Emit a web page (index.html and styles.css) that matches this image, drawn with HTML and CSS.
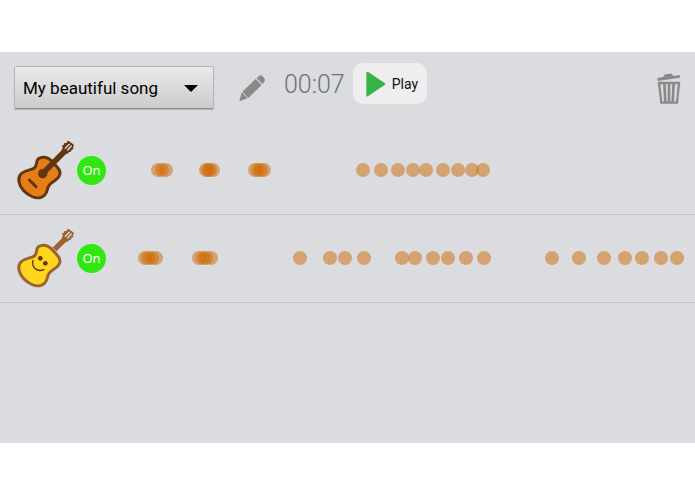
FILE: index.html
```html
<!DOCTYPE html>
<html lang="en">

<head>
    <meta charset="UTF-8">
    <meta name="viewport" content="width=device-width, initial-scale=1.0">
    <title>My beautiful song</title>
    <link rel="stylesheet" href="styles.css">
</head>

<body>
    <main class="app">
        <header class="toolbar">
            <div class="song-select">
                <select id="song" aria-label="Song">
                    <option>My beautiful song</option>
                </select>
            </div>
            <button class="icon-button edit" aria-label="Rename song">
                <svg width="28" height="28" viewBox="0 0 84 84">
                    <path fill="#8a8a8a" d="M4 82 L11 55 L29 73 Z M13 53 L53 15 L71 33 L31 72 Z M56 13 L63 6 Q68 2 73 6 L79 13 Q82 18 79 23 L73 30 Z" />
                </svg>
            </button>
            <time class="timer">00:07</time>
            <button class="play">
                <svg width="22" height="26" viewBox="0 0 66 78">
                    <path fill="#36b34a" stroke="#36b34a" stroke-width="6" stroke-linejoin="round" d="M7 5 L58 39 L7 73 Z" />
                </svg>
                Play
            </button>
            <button class="icon-button trash" aria-label="Delete song">
                <svg width="24" height="32" viewBox="0 0 72 96">
                    <path fill="#8a8a8a" d="M1 15 L18 12 L24 4 L44 2 L49 9 L68 6 L69 14 L2 24 Z" />
                    <path fill="none" stroke="#8a8a8a" stroke-width="7" d="M6 30 H66 L60 89 H13 Z" />
                    <path fill="none" stroke="#8a8a8a" stroke-width="8" d="M22 30 L25 89 M36 30 V89 M50 30 L47 89" />
                </svg>
            </button>
        </header>

        <section class="track">
            <svg class="guitar" width="62" height="64" viewBox="0 0 186 192">
                <path fill="#e67e17" stroke="#653510" stroke-width="9" stroke-linejoin="round" d="M114 67 C104 57 88 54 76 62 C68 70 74 82 64 90 C52 98 34 96 22 110 C13 123 18 143 32 158 C46 172 67 184 84 178 C105 170 100 156 107 144 C114 131 129 129 137 117 C144 106 141 96 133 88 Z" />
                <path fill="none" stroke="#653510" stroke-width="17" d="M90 106 L158 37" />
                <circle cx="89" cy="107" r="14" fill="#653510" />
                <path stroke="#653510" stroke-width="9" stroke-linecap="round" d="M49 126 L69 146" />
                <path fill="#653510" d="M146 38 L149 28 L147 22 L153 20 L154 15 L161 15 L163 9 L169 10 L172 13 L180 18 L183 23 L180 28 L181 33 L175 36 L174 41 L168 42 L164 47 L155 48 Z" />
                <path stroke="#dbdce0" stroke-width="4" stroke-linecap="round" d="M157 31 L169 19 M164 36 L175 24" />
            </svg>
            <button class="toggle" aria-pressed="true">On</button>
            <div class="timeline" id="guitar-1"></div>
        </section>

        <section class="track">
            <svg class="guitar" width="62" height="64" viewBox="0 0 186 192">
                <path fill="#ffd51e" stroke="#9c6230" stroke-width="9" stroke-linejoin="round" d="M114 67 C104 57 88 54 76 62 C68 70 74 82 64 90 C52 98 34 96 22 110 C13 123 18 143 32 158 C46 172 67 184 84 178 C105 170 100 156 107 144 C114 131 129 129 137 117 C144 106 141 96 133 88 Z" />
                <path fill="none" stroke="#9c6230" stroke-width="16" d="M125 70 L158 37" />
                <circle cx="82" cy="97" r="7" fill="#653510" />
                <circle cx="97" cy="112" r="7" fill="#653510" />
                <path fill="none" stroke="#653510" stroke-width="4" stroke-linecap="round" d="M60 103 C55 122 70 140 93 131" />
                <path fill="#9c6230" d="M146 38 L149 28 L147 22 L153 20 L154 15 L161 15 L163 9 L169 10 L172 13 L180 18 L183 23 L180 28 L181 33 L175 36 L174 41 L168 42 L164 47 L155 48 Z" />
                <path stroke="#dbdce0" stroke-width="4" stroke-linecap="round" d="M157 31 L169 19 M164 36 L175 24" />
            </svg>
            <button class="toggle" aria-pressed="true">On</button>
            <div class="timeline" id="guitar-2"></div>
        </section>
    </main>

    <script>
        // length of the song and start of every note, in ms
        const songLength = 7068;
        const notes = {
            'guitar-1': [
                624, 672, 720,
                1200, 1224, 1248, 1284,
                1788, 1824, 1860, 1896,
                3088, 3304, 3508, 3680, 3840, 4040, 4228, 4388, 4528
            ],
            'guitar-2': [
                468, 504, 552, 600,
                1116, 1164, 1200, 1260,
                2332, 2692, 2864, 3092, 3552, 3708, 3924, 4104, 4316, 4532,
                5356, 5672, 5976, 6228, 6436, 6656, 6852
            ]
        };

        for (const id in notes) {
            const timeline = document.getElementById(id);
            notes[id].forEach(function (start) {
                const note = document.createElement('span');
                note.className = 'note';
                note.style.left = (start / songLength * 100) + '%';
                timeline.appendChild(note);
            });
        }
    </script>
</body>

</html>
```
FILE: styles.css
```css
* {
    box-sizing: border-box;
}

body {
    margin: 0;
    padding: 52px 0 51px;
    min-height: 100vh;
    display: flex;
    flex-direction: column;
    background: #fff;
    font-family: Roboto, "Liberation Sans", sans-serif;
    color: #111;
}

button,
select {
    font-family: inherit;
    color: inherit;
    border: none;
    cursor: pointer;
}

.app {
    flex: 1;
    background: #dbdce0;
}

.toolbar {
    display: flex;
    align-items: flex-start;
    height: 75px;
    padding: 11px 14px 0;
}

.song-select {
    position: relative;
    width: 200px;
    margin-top: 3px;
}

.song-select select {
    display: block;
    appearance: none;
    width: 100%;
    height: 43px;
    padding: 0 40px 0 8px;
    border: 1px solid #b4b5b7;
    border-radius: 2px;
    border-bottom-color: #8f9092;
    background: linear-gradient(#e9e9e9, #cccccc);
    box-shadow: 0 1px 1px rgba(0, 0, 0, 0.2);
    font-size: 17px;
    color: #000;
}

.song-select::after {
    content: "";
    position: absolute;
    top: 19px;
    right: 16px;
    border: 7px solid transparent;
    border-top-color: #000;
    border-bottom: none;
    pointer-events: none;
}

.icon-button {
    display: block;
    padding: 0;
    background: none;
}

.icon-button svg {
    display: block;
}

.edit {
    margin: 11px 18px 0 24px;
}

.timer {
    line-height: 44px;
    font-size: 25px;
    font-weight: 300;
    color: #707174;
}

.play {
    display: flex;
    align-items: center;
    gap: 5px;
    height: 41px;
    margin-left: 8px;
    padding: 0 9px 0 12px;
    border-radius: 10px;
    background: #eeeeee;
    font-size: 14px;
}

.trash {
    margin: 10px 0 0 auto;
}

.track {
    display: flex;
    align-items: center;
    height: 88px;
    padding: 0 0 1px 13px;
    border-bottom: 1px solid #c4c5c8;
}

.guitar {
    flex: none;
    margin-right: 2px;
}

.toggle {
    flex: none;
    width: 29px;
    height: 29px;
    padding: 0;
    border-radius: 50%;
    background: #31e712;
    font-family: "Noto Sans", sans-serif;
    font-size: 13px;
    color: #fff;
}

.timeline {
    position: relative;
    flex: 1;
    height: 14px;
}

.note {
    position: absolute;
    top: 0;
    width: 14px;
    height: 14px;
    margin-left: -7px;
    border-radius: 50%;
    background: rgba(207, 106, 4, 0.5);
}
```
